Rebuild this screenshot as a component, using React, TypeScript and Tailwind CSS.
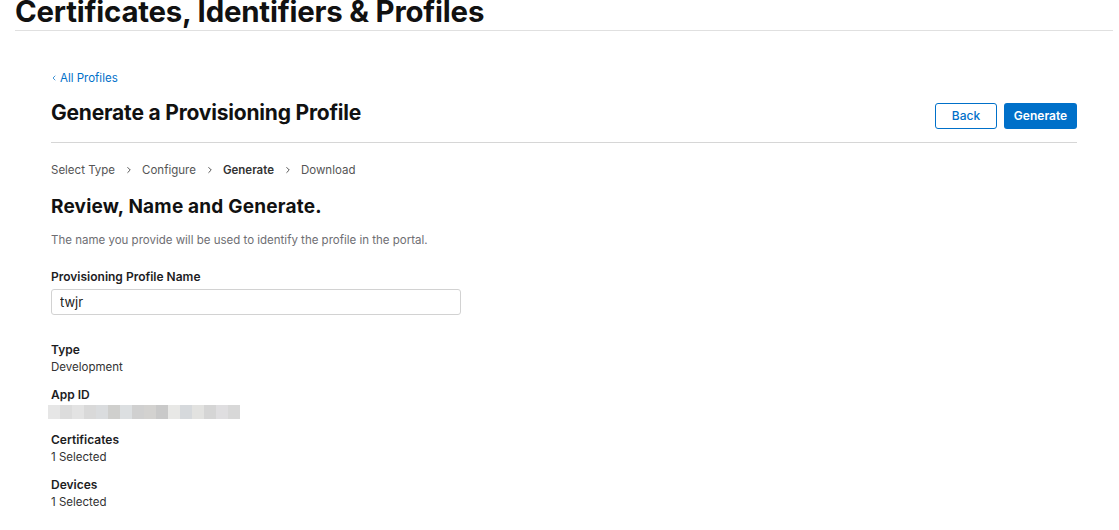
import { ChevronLeft, ChevronRight } from 'lucide-react'

const font = { fontFamily: "Inter, 'Liberation Sans', Arial, sans-serif" }

const BLOCKS = [
  '#e6e6e6', '#dcdcdc', '#e3e3e3', '#d9d9d9', '#dadcde', '#cfcfcd', '#dcdfe1', '#d0d0d0',
  '#d3d2d0', '#c9c9c9', '#e8e8e6', '#d6d9dc', '#e2e2e0', '#d5d5d5', '#dfdee0', '#d8d8d8',
]

const steps = ['Select Type', 'Configure', 'Generate', 'Download']

function Field({ label, children }: { label: string; children: React.ReactNode }) {
  return (
    <div className="mb-[11px]">
      <div className="text-[12px] font-semibold leading-[18px] text-[#1d1d1f]">{label}</div>
      {children}
    </div>
  )
}

export default function App() {
  return (
    <div className="w-[1119px] h-[530px] overflow-hidden bg-white text-[#1d1d1f]" style={font}>
      <div className="mx-[15px] mr-[6px] border-b border-[#e0e0e0] h-[31px] flex items-end">
        <h1 className="text-[29.4px] font-bold leading-[30px] tracking-[-0.2px] pb-[3px] text-[#111]">
          Certificates, Identifiers &amp; Profiles
        </h1>
      </div>

      <div className="ml-[51px] w-[1026px]">
        <a className="mt-[40px] flex items-center gap-[2px] text-[11.5px] leading-[14px] text-[#0070c9]">
          <ChevronLeft size={8} strokeWidth={2.2} className="-ml-[1px]" />
          All Profiles
        </a>

        <div className="flex items-end justify-between border-b border-[#d6d6d6] pb-[13px] mt-[15px]">
          <h2 className="text-[21px] font-bold leading-[26px] tracking-[-0.2px] mb-[3px] text-[#111]">Generate a Provisioning Profile</h2>
          <div className="flex gap-[7px]">
            <button className="w-[62px] h-[26px] rounded-[3px] border border-[#0070c9] text-[#0070c9] text-[12px] font-medium bg-white">Back</button>
            <button className="w-[73px] h-[26px] rounded-[3px] bg-[#0070c9] text-white text-[12px] font-semibold">Generate</button>
          </div>
        </div>

        <div className="flex items-center mt-[19px] text-[11.5px] leading-[16px] text-[#555]">
          {steps.map((s, i) => (
            <div key={s} className="flex items-center">
              {i > 0 && <ChevronRight size={10} strokeWidth={2.4} className="ml-[9px] mr-[8px] text-[#555]" />}
              <span className={i === 2 ? 'font-semibold text-[#333]' : ''}>{s}</span>
            </div>
          ))}
        </div>

        <h3 className="mt-[17px] text-[19px] font-bold leading-[24px] tracking-[0.2px] text-[#111]">Review, Name and Generate.</h3>
        <p className="mt-[14px] text-[11.5px] leading-[14px] text-[#6e6e73]">The name you provide will be used to identify the profile in the portal.</p>

        <div className="mt-[22px] text-[12px] font-semibold leading-[16px] text-[#1d1d1f]">Provisioning Profile Name</div>
        <input
          readOnly
          value="twjr"
          className="mt-[4px] w-[410px] h-[26px] rounded-[3px] border border-[#d2d2d2] px-[8px] text-[13px] text-[#222] outline-none"
          style={font}
        />

        <div className="mt-[26px]">
          <Field label="Type">
            <div className="text-[11.5px] leading-[16px] text-[#333]">Development</div>
          </Field>
          <Field label="App ID">
            <div className="flex mt-[1px] h-[14px] -ml-[3px]">
              {BLOCKS.map((c, i) => (
                <div key={i} className="w-[12px] h-full" style={{ background: c }} />
              ))}
            </div>
          </Field>
          <div className="h-[1px]" />
          <Field label="Certificates">
            <div className="text-[11.5px] leading-[16px] text-[#333]">1 Selected</div>
          </Field>
          <Field label="Devices">
            <div className="text-[11.5px] leading-[16px] text-[#333]">1 Selected</div>
          </Field>
        </div>
      </div>
    </div>
  )
}
